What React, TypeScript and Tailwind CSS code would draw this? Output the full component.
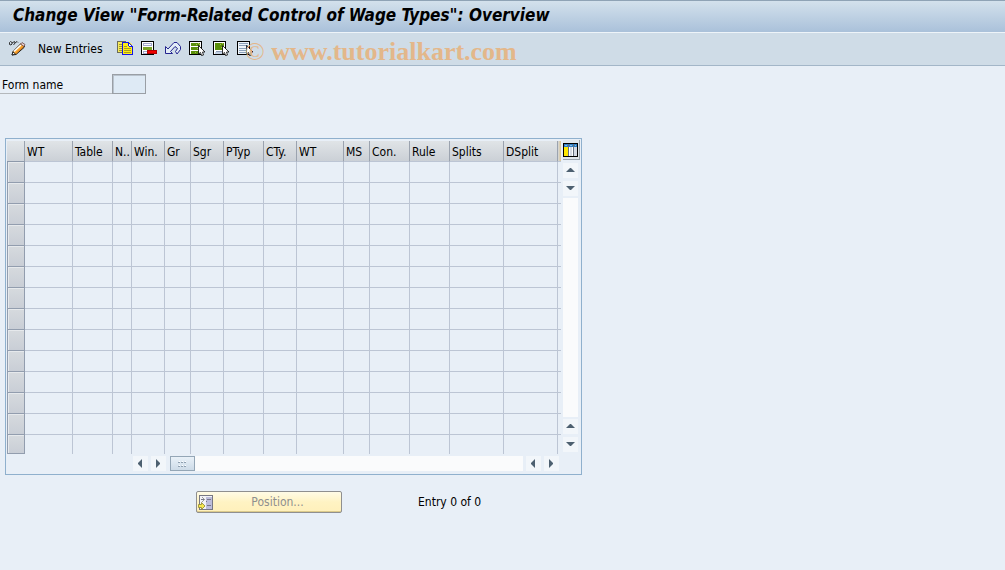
import { useState } from "react";

type Column = { id: string; label: string; width: string };

const columns: Column[] = [
  { id: "wt1", label: "WT", width: "w-[48px]" },
  { id: "table", label: "Table", width: "w-[40px]" },
  { id: "n", label: "N..", width: "w-[19px]" },
  { id: "win", label: "Win.", width: "w-[33px]" },
  { id: "gr", label: "Gr", width: "w-[26px]" },
  { id: "sgr", label: "Sgr", width: "w-[33px]" },
  { id: "ptyp", label: "PTyp", width: "w-[40px]" },
  { id: "cty", label: "CTy.", width: "w-[33px]" },
  { id: "wt2", label: "WT", width: "w-[47px]" },
  { id: "ms", label: "MS", width: "w-[26px]" },
  { id: "con", label: "Con.", width: "w-[40px]" },
  { id: "rule", label: "Rule", width: "w-[40px]" },
  { id: "splits", label: "Splits", width: "w-[54px]" },
  { id: "dsplit", label: "DSplit", width: "w-[54px]" },
];

const rows = Array.from({ length: 14 }, (_, i) => i);

export default function App() {
  return (
    <div className="relative min-h-screen bg-[#e8eff7] font-['DejaVu_Sans_Condensed','DejaVu_Sans',sans-serif] text-[12px] leading-4 text-black">
      <header className="mb-2 border-b border-[#a3b6c8] bg-[#cfdce7]">
        <div className="h-[33px] border-t border-b border-t-[#8fa3b5] border-b-[#eef4f9] bg-linear-to-b from-[#d3e1ec] to-[#aac1da] pl-[13px]">
          <h1 className="text-[17px] leading-7 font-bold whitespace-nowrap italic">
            Change View "Form-Related Control of Wage Types": Overview
          </h1>
        </div>
        <Toolbar />
      </header>
      <Watermark />
      <main>
        <FormName />
        <EntryTable />
        <div className="mt-4 ml-[196px] flex items-center">
          <button
            type="button"
            disabled
            className="flex h-[22px] w-[146px] items-center rounded-[2px] border border-[#8f8f8f] bg-linear-to-b from-[#fffbe6] via-[#fff3c3] to-[#fff0bb] pl-px text-[#8f8f8f] shadow-[inset_0_-1px_0_#dccb8c]"
          >
            <PositionIcon />
            <span className="grow text-center">Position...</span>
          </button>
          <span className="ml-[76px]">Entry 0 of 0</span>
        </div>
      </main>
    </div>
  );
}

function Toolbar() {
  const actions = [
    { name: "Copy As", icon: <CopyIcon /> },
    { name: "Delete", icon: <DeleteIcon /> },
    { name: "Undo Change", icon: <UndoIcon /> },
    { name: "Select All", icon: <SelectAllIcon /> },
    { name: "Select Block", icon: <SelectBlockIcon /> },
    { name: "Deselect All", icon: <DeselectIcon /> },
  ];
  return (
    <div className="flex h-8 items-center pb-px pl-2">
      <button type="button" aria-label="Display/Change">
        <PencilIcon />
      </button>
      <button type="button" className="ml-3 w-[67px] text-left whitespace-nowrap">
        New Entries
      </button>
      <div className="ml-3 flex gap-[7px]">
        {actions.map(action => (
          <button key={action.name} type="button" aria-label={action.name}>
            {action.icon}
          </button>
        ))}
      </div>
    </div>
  );
}

function Watermark() {
  return (
    <div className="pointer-events-none absolute top-9 left-[245px] font-['Liberation_Serif',serif] text-[26px] leading-8 whitespace-nowrap text-[#e3b78a]">
      © <span className="font-bold">www.tutorialkart.com</span>
    </div>
  );
}

function FormName() {
  const [formName, setFormName] = useState("");
  return (
    <div className="flex h-5">
      <label htmlFor="form-name" className="w-28 border-b border-[#b4b8bc] pt-[3px] pl-[2px]">
        Form name
      </label>
      <input
        id="form-name"
        value={formName}
        onChange={ev => setFormName(ev.target.value)}
        className="h-5 w-[34px] border border-[#9a9fa5] bg-[#deeaf5] px-1 shadow-[inset_1px_1px_0_#b9c3cd] outline-none"
      />
    </div>
  );
}

function EntryTable() {
  return (
    <section className="mt-11 ml-[5px] w-fit border border-[#8fb0cd] pb-[3px] pl-px">
      <div className="flex">
        <table className="mt-[2px] w-[554px] table-fixed border-separate border-spacing-0">
          <thead>
            <tr className="h-[21px]">
              <th className="w-[18px] border-r border-b border-r-[#9aa3b0] border-b-[#8d99aa] bg-linear-to-b from-[#e2e6e9] to-[#cfd4da] p-0" />
              {columns.map(column => (
                <th
                  key={column.id}
                  className={`${column.width} overflow-hidden border-r border-b border-r-[#9ba3af] border-b-[#bcc5d4] bg-linear-to-b from-[#e0e4e7] to-[#cbd0d6] p-0 pt-px pl-[2px] text-left font-normal whitespace-nowrap`}
                >
                  {column.label}
                </th>
              ))}
              <th className="w-[3px] border-b border-[#bcc5d4] bg-linear-to-r from-[#d5d9dd] to-[#dcc48f] p-0" />
            </tr>
          </thead>
          <tbody>
            {rows.map(row => (
              <tr key={row} className="h-[21px] last:h-[19px]">
                <td className="border-r border-b border-l border-[#929dae] bg-linear-to-b from-[#d6dade] to-[#c9ced6] p-0 shadow-[inset_1px_1px_0_#e6e9ec]" />
                {columns.map(column => (
                  <td
                    key={column.id}
                    className={
                      row === rows.length - 1
                        ? "border-r border-[#bcc5d4] p-0"
                        : "border-r border-b border-[#bcc5d4] p-0"
                    }
                  />
                ))}
                <td className={row === rows.length - 1 ? "p-0" : "border-b border-[#bcc5d4] p-0"} />
              </tr>
            ))}
          </tbody>
        </table>
        <div className="flex w-5 flex-col items-start pt-px pl-[2px]">
          <button
            type="button"
            aria-label="Configuration"
            className="mb-[3px] flex h-5 w-[17px] items-center justify-center border-r border-b border-[#9aa3ad] bg-[#e1e7ec]"
          >
            <ConfigIcon />
          </button>
          <ArrowButton label="Scroll up" points="3,9 12,9 8,5 7,5" />
          <div className="h-[3px]" />
          <ArrowButton label="Scroll down" points="3,5 12,5 8,9 7,9" />
          <div className="my-[2px] w-[15px] grow bg-[#fafbfc]" />
          <ArrowButton label="Page up" points="3,9 12,9 8,5 7,5" />
          <div className="h-[3px]" />
          <ArrowButton label="Page down" points="3,5 12,5 8,9 7,9" />
          <div className="h-[2px]" />
        </div>
      </div>
      <div className="mt-[2px] mr-[22px] ml-[126px] flex h-[15px] items-center gap-[3px]">
        <ArrowButton label="Scroll left" points="9,3 9,12 5,8 5,7" />
        <ArrowButton label="Scroll right" points="5,3 5,12 9,8 9,7" />
        <div className="ml-px flex h-[15px] grow items-center bg-[#fafbfc]">
          <button
            type="button"
            aria-label="Scroll thumb"
            className="flex h-[15px] w-[25px] items-center justify-center border border-[#94a6b6] bg-linear-to-b from-[#e9f1f8] to-[#cddbe8]"
          >
            <svg width="9" height="6" shapeRendering="crispEdges" fill="#8fa0b0">
              <path d="M0 1h2v1H0zM3 1h2v1H3zM6 1h2v1H6zM0 5h2v1H0zM3 5h2v1H3zM6 5h2v1H6z" />
              <path fill="#fff" d="M1 0h1v1H1zM4 0h1v1H4zM7 0h1v1H7zM1 4h1v1H1zM4 4h1v1H4zM7 4h1v1H7z" />
            </svg>
          </button>
        </div>
        <ArrowButton label="Page left" points="9,3 9,12 5,8 5,7" />
        <ArrowButton label="Page right" points="5,3 5,12 9,8 9,7" />
      </div>
    </section>
  );
}

function ArrowButton({ label, points }: { label: string; points: string }) {
  return (
    <button type="button" aria-label={label} className="h-[15px] w-[15px] shrink-0 bg-[#f2f6fa]">
      <svg width="15" height="15" viewBox="0 0 15 15">
        <polygon points={points} fill="#4d6070" />
      </svg>
    </button>
  );
}

function PencilIcon() {
  return (
    <svg width="18" height="17" viewBox="0 0 18 17" className="block">
      <path
        d="M1.500 4.500V2.500L2.500 1.500L4 2.500V4L3 5ZM4 3L6.500 1.500L7 3L5.500 5M7 3L9 1.500L10 2.500"
        fill="none"
        stroke="#222"
        strokeWidth=".9"
      />
      <path d="M4 15L5 11.500L13 3.500L16.500 6L16 7.500L8 14.500Z" fill="#f9a52e" stroke="#111" strokeWidth=".9" />
      <path d="M6 11.500L13 5" stroke="#fff" strokeWidth="1.600" />
      <path d="M8 13.500L15 7" stroke="#d97b1a" strokeWidth="1" />
      <path d="M12.500 4L14 2.500L17 4.500L16 6.500Z" fill="#ead0ce" stroke="#5b3530" strokeWidth=".7" />
      <path d="M4 15L5 12L7.500 14Z" fill="#fff" stroke="#111" strokeWidth=".8" />
    </svg>
  );
}

function CopyIcon() {
  return (
    <svg width="17" height="17" viewBox="0 0 17 17" shapeRendering="crispEdges" className="block">
      <path d="M.5 1.500H8.500V12.500H.5Z" fill="#f6ea5c" stroke="#6d6d58" />
      <path d="M2 4.500H5M2 6.500H5M2 8.500H5M2 10.500H5" stroke="#a39a2c" />
      <path d="M5 2H12L15 5V15H5Z" fill="#ffec16" />
      <path
        d="M5 2h7v1H5zM5 3h1v11H5zM5 14h11v1H5zM15 6h1v8h-1zM12 3h1v1h-1zM13 4h1v1h-1zM14 5h1v1h-1zM11 3h1v3h-1zM12 6h3v1h-3z"
        fill="#1515e5"
      />
      <path d="M12 4h1v2h-1zM13 5h1v1h-1z" fill="#fff" />
      <path d="M7 6.500H10M7 8.500H14M7 10.500H14M7 12.500H14" stroke="#aaa01e" />
    </svg>
  );
}

function DeleteIcon() {
  return (
    <svg width="17" height="17" viewBox="0 0 17 17" shapeRendering="crispEdges" className="block">
      <path d="M.5 1.500H12.500V14.500H.5Z" fill="#fff" stroke="#000" />
      <path d="M2.500 3.500H10.500V5.500H2.500Z" fill="#fff" stroke="#a3a7cb" />
      <path d="M2 7H11V10H2Z" fill="#7ba327" />
      <path d="M2.500 11.500H7V13H2.500Z" fill="#fff" stroke="#a3a7cb" />
      <path d="M6.500 10.500H15.500V13.500H6.500Z" fill="#f00000" stroke="#b00000" />
    </svg>
  );
}

function UndoIcon() {
  return (
    <svg width="17" height="17" viewBox="0 0 17 17" className="block">
      <path
        d="M.5 6.500V13.500H7.500L5.500 11.500L10 6.500L12.500 8.500L10.500 11.500L12 14L15.500 9.500V6.500L12 2.500H9L3 9Z"
        fill="#e3edf7"
        stroke="#24248f"
        strokeWidth="1"
      />
    </svg>
  );
}

function Cursor() {
  return (
    <path
      d="M9.500 5.500V14L11.500 12.500L12.500 15.500L14.500 15L13.500 12H16Z"
      fill="#fff"
      stroke="#000"
      strokeWidth=".8"
      shapeRendering="auto"
    />
  );
}

function SelectAllIcon() {
  return (
    <svg width="17" height="17" viewBox="0 0 17 17" shapeRendering="crispEdges" className="block">
      <path d="M.5 1.500H12.500V14.500H.5Z" fill="#fff" stroke="#000" />
      <path d="M2 3H11V6H2ZM2 7H11V10H2ZM2 11H11V14H2Z" fill="#5a8f0a" />
      <path d="M7 4h1v1H7zM9 3h1v1H9zM8 8h1v1H8zM10 4h1v1h-1zM6 12h1v1H6z" fill="#a7bd45" />
      <Cursor />
    </svg>
  );
}

function SelectBlockIcon() {
  return (
    <svg width="17" height="17" viewBox="0 0 17 17" shapeRendering="crispEdges" className="block">
      <path d="M.5 1.500H12.500V14.500H.5Z" fill="#fff" stroke="#000" />
      <path d="M2 3H11V10H2Z" fill="#5a8f0a" />
      <path d="M7 4h1v1H7zM9 3h1v1H9zM9 5h1v1H9zM8 7h1v1H8zM10 6h1v1h-1z" fill="#a7bd45" />
      <path d="M2.500 11.500H9" stroke="#8c9bb5" />
      <path d="M2 12H9V14H2Z" fill="#c4d2e4" />
      <Cursor />
    </svg>
  );
}

function DeselectIcon() {
  return (
    <svg width="17" height="17" viewBox="0 0 17 17" shapeRendering="crispEdges" className="block">
      <path d="M.5 1.500H12.500V14.500H.5Z" fill="#eef4fa" stroke="#000" />
      <path d="M2 3.500H11M2 5.500H11M2 8.500H9M2 10.500H9M2 12.500H9" stroke="#8ba1bb" />
      <Cursor />
    </svg>
  );
}

function ConfigIcon() {
  return (
    <svg width="16" height="16" viewBox="0 0 16 16" shapeRendering="crispEdges" className="block shrink-0">
      <path d="M.5 1.500H14.500V14.500H.5Z" fill="#fff" stroke="#000" />
      <path d="M1 2H14V5H1Z" fill="#2f7fc4" />
      <path d="M1 5H5V14H1Z" fill="#ffe800" />
      <path d="M7 5H9V14H7ZM11 5H14V14H11Z" fill="#d5dae4" />
      <path d="M5.500 2V14M10.500 2V14" stroke="#65717e" />
      <path d="M2 3h2v1H2zM7 3h2v1H7zM12 3h1v1h-1z" fill="#82b9e5" />
    </svg>
  );
}

function PositionIcon() {
  return (
    <svg width="16" height="17" viewBox="0 0 16 17" shapeRendering="crispEdges" className="block">
      <path d="M1.500 1.500H14.500V15.500H1.500Z" fill="#f2f2f6" stroke="#777783" />
      <path d="M8 3H14V15H8Z" fill="#bdbddb" />
      <path d="M3 5.500H6M9 5.500H13M9 11.500H13M8 7.500H9" stroke="#77778a" />
      <path d="M4 3L6.500 5.500L4 8" fill="none" stroke="#999" />
      <path
        d="M.5 10.500H3.500V8.500L7 12L3.500 15.500V13.500H.5Z"
        fill="#f7e84e"
        stroke="#8d8430"
        strokeWidth=".8"
        shapeRendering="auto"
      />
    </svg>
  );
}
